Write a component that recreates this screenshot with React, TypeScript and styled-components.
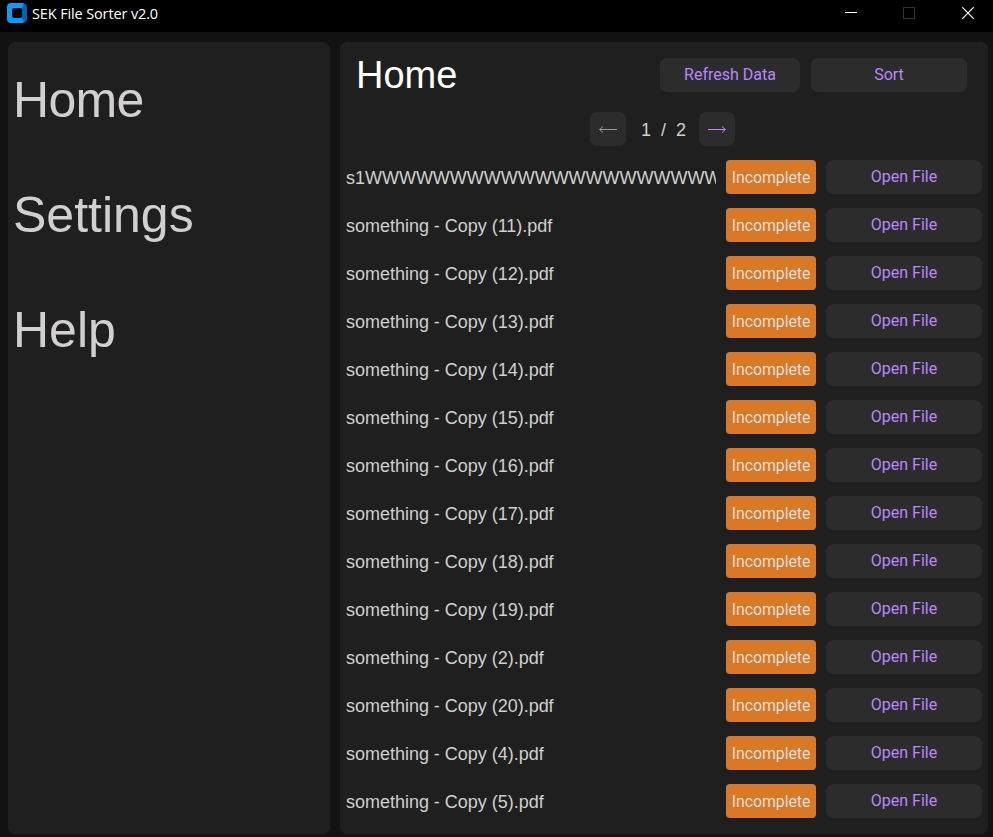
import React from "react";
import styled, { createGlobalStyle } from "styled-components";

const GlobalStyle = createGlobalStyle`
  * { box-sizing: border-box; }
  body { margin: 0; background: #121212; overflow: hidden; }
`;

const Window = styled.div`
  display: flex;
  flex-direction: column;
  width: 993px;
  height: 837px;
  background: #121212;
  color: #d1cfcf;
  font-family: "Liberation Sans", Arial, sans-serif;
`;

const TitleBar = styled.header`
  display: flex;
  align-items: flex-start;
  height: 32px;
  flex: none;
  padding-left: 7px;
  background: #000;
`;

const AppIcon = styled.svg`
  width: 20px;
  height: 20px;
  margin-top: 3px;
`;

const Title = styled.span`
  flex: 1;
  margin-left: 5px;
  color: #fff;
  font: 14.5px/28px "Open Sans", sans-serif;
  letter-spacing: -0.13px;
  white-space: nowrap;
`;

const WindowControl = styled.button`
  width: 58px;
  height: 26px;
  padding: 0;
  border: 0;
  background: none;
  display: flex;
  align-items: center;
  justify-content: center;
  &:last-child { margin-right: -4px; margin-left: 1px; }
`;

const Body = styled.div`
  flex: 1;
  display: flex;
  gap: 10px;
  padding: 10px 5px 3px 8px;
`;

const Sidebar = styled.nav`
  width: 322px;
  padding: 29px 0 0 5px;
  border-radius: 7px;
  background: #1f1f1f;
  display: flex;
  flex-direction: column;
  gap: 57px;
`;

const NavItem = styled.a<{ $tracking: number }>`
  font-size: 50px;
  line-height: 58px;
  letter-spacing: ${(p) => p.$tracking}px;
`;

const Main = styled.main`
  width: 648px;
  border-radius: 7px;
  background: #1f1f1f;
`;

const Header = styled.div`
  display: flex;
  height: 50px;
  padding: 0 21px 0 16px;
  align-items: flex-end;
  gap: 11px;
`;

const Heading = styled.h1`
  flex: 1;
  margin: 0 0 -5px;
  color: #fff;
  font-size: 38px;
  font-weight: 400;
  line-height: 44px;
`;

const Button = styled.button<{ $width: number; $muted?: boolean }>`
  width: ${(p) => p.$width}px;
  height: 34px;
  flex: none;
  padding: 0;
  border: 0;
  border-radius: 7px;
  background: #2c2c2c;
  color: ${(p) => (p.$muted ? "#999" : "#bb86fc")};
  font: 16px/20px Roboto, sans-serif;
  display: flex;
  align-items: center;
  justify-content: center;
`;

const Pager = styled.div`
  display: flex;
  align-items: center;
  padding: 20px 0 14px 250px;
`;

const PageCount = styled.span`
  width: 73px;
  height: 34px;
  padding-left: 2px;
  text-align: center;
  font-size: 18px;
  line-height: 36px;
  white-space: pre;
`;

const FileList = styled.div`
  display: grid;
  gap: 14px;
  padding: 0 6px;
`;

const FileRow = styled.div`
  display: grid;
  grid-template-columns: 370px 90px 156px;
  column-gap: 10px;
  height: 34px;
`;

const FileName = styled.span`
  height: 34px;
  overflow: hidden;
  white-space: nowrap;
  font-size: 18px;
  line-height: 36px;
  letter-spacing: -0.02px;
`;

const Badge = styled.span`
  height: 34px;
  padding: 1px 0 0;
  border-radius: 4px;
  background: #d97826;
  color: #e0dcd8;
  font: 16px/33px Roboto, sans-serif;
  letter-spacing: -0.12px;
  text-align: center;
`;

const files = [
  "s1WWWWWWWWWWWWWWWWWWWWWWWWWW.pdf",
  ...[11, 12, 13, 14, 15, 16, 17, 18, 19, 2, 20, 4, 5].map((n) => `something - Copy (${n}).pdf`),
];

const Arrow = ({ left }: { left?: boolean }) => (
  <svg width="18" height="8" viewBox="0 0 18 8" fill="none" stroke="currentColor">
    {left ? <path d="M0.5 4.5H18M4 1.5L0.7 4.5L4 7.5" /> : <path d="M0 4.5H17.5M14 1.5L17.3 4.5L14 7.5" />}
  </svg>
);

export default function App() {
  return (
    <Window>
      <GlobalStyle />
      <TitleBar>
        <AppIcon viewBox="0 0 20 20">
          <rect width="20" height="20" rx="4.5" fill="#0063b1" />
          <path d="M4.5 0H15Q17 0 16.5 2L15 6V14L16.5 18Q17 20 15 20H4.5Q0 20 0 15.5V4.5Q0 0 4.5 0Z" fill="#0a9cff" />
          <path d="M14 6L17 2V18L14 14Z" fill="#0063b1" />
          <rect x="5" y="5" width="10" height="10" rx="2" fill="#000" />
        </AppIcon>
        <Title>SEK File Sorter v2.0</Title>
        <WindowControl aria-label="Minimize">
          <svg width="12" height="12"><path d="M0 5.5H12" stroke="#fff" /></svg>
        </WindowControl>
        <WindowControl aria-label="Maximize">
          <svg width="12" height="12"><rect x=".5" y=".5" width="11" height="11" fill="none" stroke="#333" /></svg>
        </WindowControl>
        <WindowControl aria-label="Close">
          <svg width="12" height="12"><path d="M.3 .3L11.7 11.7M11.7 .3L.3 11.7" stroke="#fff" strokeWidth="1.2" /></svg>
        </WindowControl>
      </TitleBar>
      <Body>
        <Sidebar>
          <NavItem $tracking={-0.7}>Home</NavItem>
          <NavItem $tracking={0}>Settings</NavItem>
          <NavItem $tracking={0}>Help</NavItem>
        </Sidebar>
        <Main>
          <Header>
            <Heading>Home</Heading>
            <Button $width={140}>Refresh Data</Button>
            <Button $width={156}>Sort</Button>
          </Header>
          <Pager>
            <Button $width={36} $muted aria-label="Previous page"><Arrow left /></Button>
            <PageCount>{"1  /  2"}</PageCount>
            <Button $width={36} aria-label="Next page"><Arrow /></Button>
          </Pager>
          <FileList>
            {files.map((name) => (
              <FileRow key={name}>
                <FileName>{name}</FileName>
                <Badge>Incomplete</Badge>
                <Button $width={156}>Open File</Button>
              </FileRow>
            ))}
          </FileList>
        </Main>
      </Body>
    </Window>
  );
}
